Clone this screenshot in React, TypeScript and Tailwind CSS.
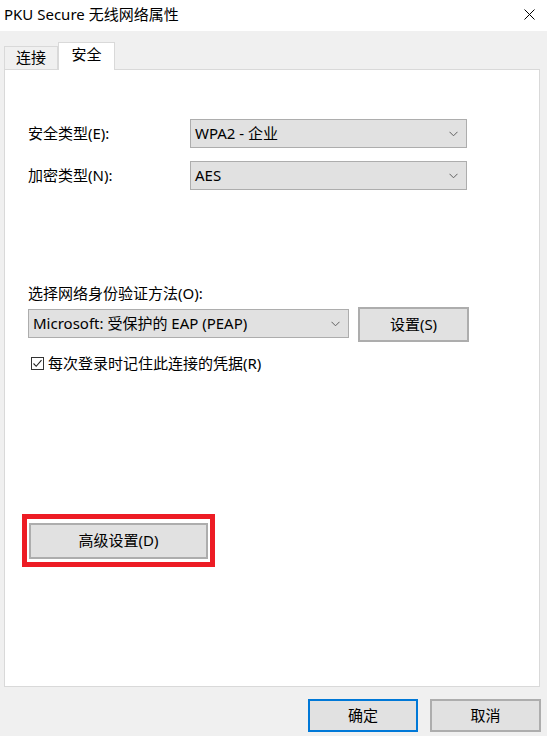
import React from "react";

const font = { fontFamily: '"Noto Sans", "Noto Sans CJK SC", sans-serif' };

function Chevron() {
    return (
        <svg width="9" height="6" viewBox="0 0 9 6" className="shrink-0">
            <path d="M0.5 0.8 L4.5 4.8 L8.5 0.8" fill="none" stroke="#606060" strokeWidth="1" />
        </svg>
    );
}

function Combo({ value, className }: { value: string; className: string }) {
    return (
        <div className={`flex items-center justify-between h-[29px] pl-[4px] pr-[8px] bg-[#e1e1e1] border border-[#adadad] ${className}`}>
            <span className="text-[15px] leading-none text-black whitespace-nowrap">{value}</span>
            <Chevron />
        </div>
    );
}

function Button({ label, className }: { label: string; className: string }) {
    return (
        <div className={`flex items-center justify-center bg-[#e1e1e1] text-[15px] leading-none text-black ${className}`}>
            {label}
        </div>
    );
}

export default function App() {
    return (
        <div style={font} className="w-[547px] h-[736px] bg-[#f0f0f0] flex flex-col overflow-hidden">
            {/* title bar */}
            <div className="h-[31px] bg-white flex items-center justify-between pl-[4px] pr-[12px] pb-[3px]">
                <span className="text-[15px] leading-none text-black whitespace-nowrap">PKU Secure 无线网络属性</span>
                <svg width="11" height="11" viewBox="0 0 11 11">
                    <path d="M0.5 0.5 L10.5 10.5 M10.5 0.5 L0.5 10.5" stroke="#000" strokeWidth="1" />
                </svg>
            </div>

            {/* tabs */}
            <div className="h-[38px] flex items-end pl-[4px]">
                <div className="w-[54px] h-[23px] border border-b-0 border-[#d9d9d9] bg-[#f0f0f0] flex items-center justify-center pb-[2px]">
                    <span className="text-[15px] leading-none">连接</span>
                </div>
                <div className="w-[57px] h-[28px] -mb-px relative z-10 border border-b-0 border-[#d9d9d9] bg-white flex items-center justify-center pb-[5px]">
                    <span className="text-[15px] leading-none">安全</span>
                </div>
            </div>

            {/* panel */}
            <div className="ml-[4px] w-[536px] h-[618px] bg-white border border-[#d9d9d9] flex flex-col pl-[23px] pt-[49px]">
                <div className="flex items-center">
                    <span className="w-[162px] text-[15px] leading-none">安全类型(E):</span>
                    <Combo value="WPA2 - 企业" className="w-[277px]" />
                </div>
                <div className="flex items-center mt-[13px]">
                    <span className="w-[162px] text-[15px] leading-none">加密类型(N):</span>
                    <Combo value="AES" className="w-[277px]" />
                </div>

                <div className="mt-[93px] h-[20px] flex items-center text-[15px] leading-none">
                    选择网络身份验证方法(O):
                </div>
                <div className="mt-[4px] flex items-start gap-[9px]">
                    <Combo value="Microsoft: 受保护的 EAP (PEAP)" className="w-[321px] mt-[2px]" />
                    <Button label="设置(S)" className="w-[111px] h-[35px] border-2 border-[#adadad]" />
                </div>

                <div className="mt-[11px] h-[20px] flex items-center">
                    <div className="ml-[3px] w-[13px] h-[13px] border border-[#333] bg-white flex items-center justify-center">
                        <svg width="11" height="11" viewBox="0 0 11 11">
                            <path d="M1.5 5.5 L4.2 8.3 L9.5 2.2" fill="none" stroke="#222" strokeWidth="1.1" />
                        </svg>
                    </div>
                    <span className="ml-[4px] text-[15px] leading-none">每次登录时记住此连接的凭据(R)</span>
                </div>

                <div className="mt-[141px] -ml-[6px] w-[193px] h-[53px] border-[5px] border-[#ed1c24] flex items-center justify-center">
                    <Button label="高级设置(D)" className="w-[179px] h-[36px] border-2 border-[#adadad]" />
                </div>
            </div>

            {/* bottom buttons */}
            <div className="mt-[12px] flex justify-end gap-[12px] pr-[6px]">
                <Button label="确定" className="w-[110px] h-[33px] border-2 border-[#0078d7]" />
                <Button label="取消" className="w-[111px] h-[33px] border-2 border-[#adadad]" />
            </div>
        </div>
    );
}
